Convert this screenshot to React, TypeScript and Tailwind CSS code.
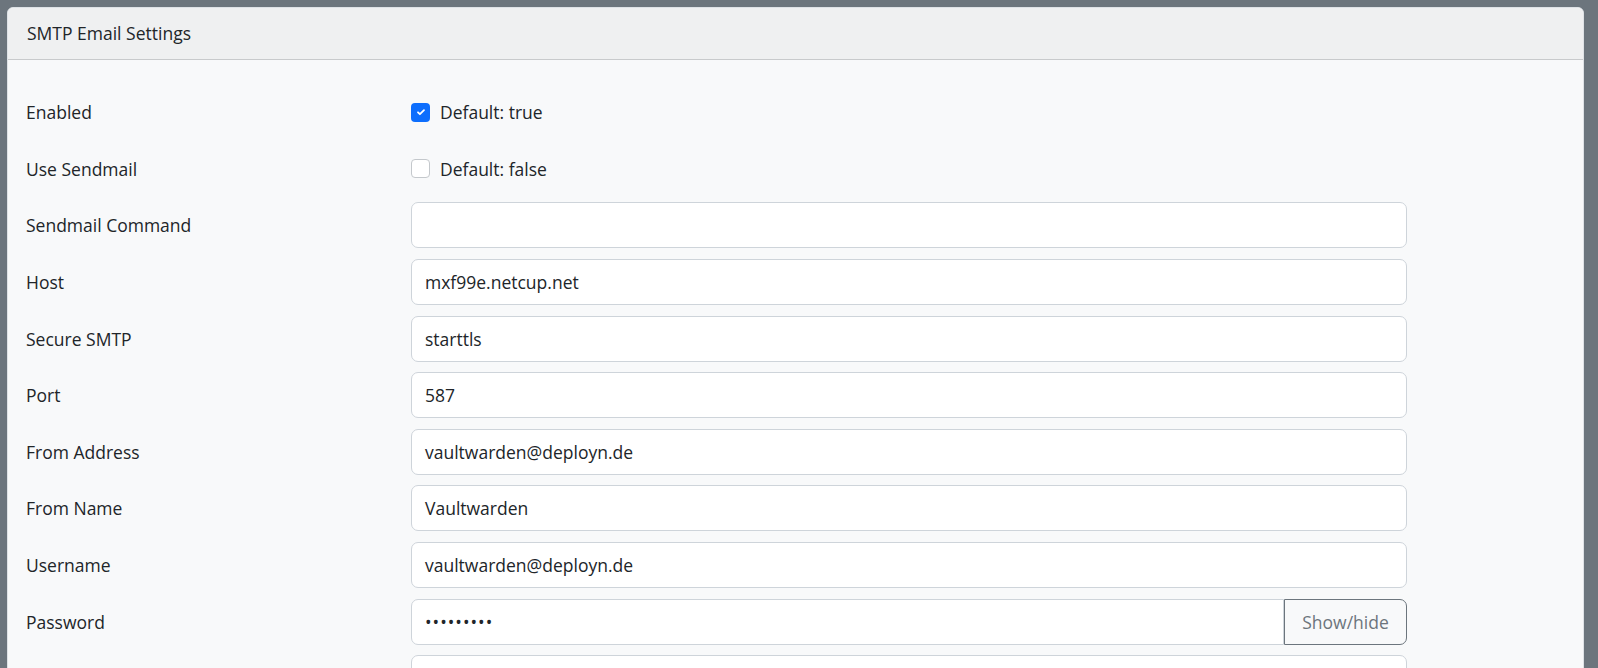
const fields: [string, string][] = [
  ["Sendmail Command", ""],
  ["Host", "mxf99e.netcup.net"],
  ["Secure SMTP", "starttls"],
  ["Port", "587"],
  ["From Address", "vaultwarden@deployn.de"],
  ["From Name", "Vaultwarden"],
  ["Username", "vaultwarden@deployn.de"],
];

function Check({ on }: { on: boolean }) {
  return on ? (
    <span className="w-[19px] h-[19px] rounded-[4px] bg-[#0d6efd] flex items-center justify-center">
      <svg width="12" height="12" viewBox="0 0 20 20"><path d="M5 10.5l3.2 3.2L15 7" fill="none" stroke="#fff" strokeWidth="3" strokeLinecap="round" strokeLinejoin="round" /></svg>
    </span>
  ) : (
    <span className="w-[19px] h-[19px] rounded-[4px] bg-white border border-[#c4c8cc]" />
  );
}

export default function App() {
  return (
    <div className="bg-[#6c757d] w-[1598px] h-[668px] overflow-hidden pt-[7px] pl-[7px] text-[#212529]" style={{ fontFamily: '"Open Sans", "Noto Sans", sans-serif' }}>
      <div className="w-[1577px] h-[700px] bg-[#f8f9fa] rounded-[6px] overflow-hidden border border-[#dee2e6]">
        <div className="h-[52px] bg-[#eff0f1] border-b border-[#c8cacc] flex items-center px-[19px] text-[17.5px]">SMTP Email Settings</div>
        <div className="pt-[24px] text-[17.5px]">
          {[["Enabled", "Default: true", true], ["Use Sendmail", "Default: false", false]].map(([l, d, on]) => (
            <div key={l as string} className="flex items-center h-[56.6px]">
              <div className="w-[403px] pl-[18px]">{l as string}</div>
              <div className="flex items-center gap-[10px]"><Check on={on as boolean} />{d as string}</div>
            </div>
          ))}
          {fields.map(([l, v]) => (
            <div key={l} className="flex items-center h-[56.6px]">
              <div className="w-[403px] pl-[18px]">{l}</div>
              <div className="w-[996px] h-[46px] bg-white border border-[#ced4da] rounded-[7px] flex items-center px-[13px]">{v}</div>
            </div>
          ))}
          <div className="flex items-center h-[56.6px]">
            <div className="w-[403px] pl-[18px]">Password</div>
            <div className="w-[996px] h-[46px] flex">
              <div className="flex-1 bg-white border border-[#ced4da] rounded-l-[7px] flex items-center px-[13px] tracking-[1px]">•••••••••</div>
              <div className="w-[123px] border border-[#6c757d] rounded-r-[7px] flex items-center justify-center text-[#6c757d]">Show/hide</div>
            </div>
          </div>
          <div className="flex items-center h-[56.6px]">
            <div className="w-[403px]" />
            <div className="w-[996px] h-[46px] bg-white border border-[#ced4da] rounded-[7px]" />
          </div>
        </div>
      </div>
    </div>
  );
}
